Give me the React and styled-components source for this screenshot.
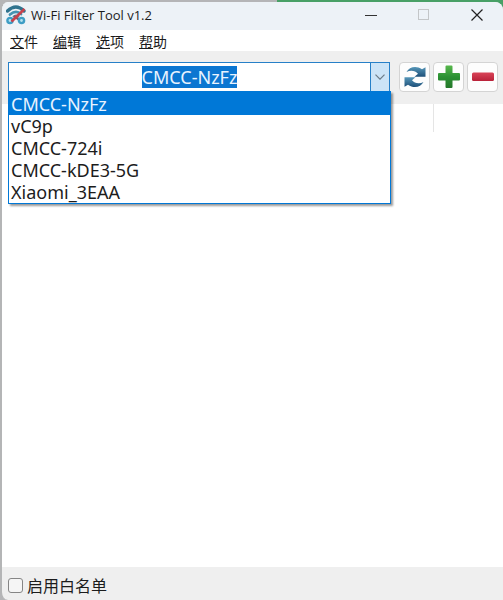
import React, { useEffect, useRef, useState } from "react";
import styled, { createGlobalStyle } from "styled-components";

const networks = ["CMCC-NzFz", "vC9p", "CMCC-724i", "CMCC-kDE3-5G", "Xiaomi_3EAA"];

const menus = [
  ["文", "件"],
  ["编", "辑"],
  ["选", "项"],
  ["帮", "助"],
];

function App() {
  const inputRef = useRef(null);
  const [network, setNetwork] = useState(networks[0]);
  const [open, setOpen] = useState(true);

  useEffect(() => {
    inputRef.current?.focus();
    inputRef.current?.select();
  }, []);

  const pick = (name) => {
    setNetwork(name);
    setOpen(false);
  };

  return (
    <Desktop>
      <GlobalStyle />
      <Window>
        <TitleBar>
          <AppIcon />
          <Title>Wi-Fi Filter Tool v1.2</Title>
          <WindowButton aria-label="Minimize">
            <svg width="12" height="12" viewBox="0 0 12 12">
              <path d="M0 6.5h12" stroke="#333" />
            </svg>
          </WindowButton>
          <WindowButton aria-label="Maximize" disabled>
            <svg width="12" height="12" viewBox="0 0 12 12">
              <rect x=".5" y=".5" width="10" height="10" fill="none" stroke="#c3c6c8" />
            </svg>
          </WindowButton>
          <WindowButton aria-label="Close">
            <svg width="12" height="12" viewBox="0 0 12 12">
              <path d="M.5.5l11 11M11.5.5l-11 11" stroke="#222" strokeWidth="1.2" />
            </svg>
          </WindowButton>
        </TitleBar>

        <MenuBar>
          {menus.map(([key, rest]) => (
            <MenuButton key={key}>
              <u>{key}</u>
              {rest}
            </MenuButton>
          ))}
        </MenuBar>

        <Toolbar>
          <ComboBox>
            <ComboInput
              ref={inputRef}
              aria-label="Network"
              role="combobox"
              aria-expanded={open}
              aria-controls="networks"
              spellCheck={false}
              value={network}
              onChange={(e) => setNetwork(e.target.value)}
            />
            <ComboArrow aria-label="Show networks" onClick={() => setOpen(!open)}>
              <svg width="10" height="6" viewBox="0 0 10 6">
                <path d="M.5.7L5 5.2 9.5.7" fill="none" stroke="#6c7b87" strokeWidth="1.2" />
              </svg>
            </ComboArrow>
            {open && (
              <Options id="networks" role="listbox">
                {networks.map((name) => (
                  <Option
                    key={name}
                    role="option"
                    aria-selected={name === network}
                    $selected={name === network}
                    onClick={() => pick(name)}
                  >
                    {name}
                  </Option>
                ))}
              </Options>
            )}
          </ComboBox>
          <Tools>
            <ToolButton aria-label="Refresh">
              <RefreshIcon />
            </ToolButton>
            <ToolButton aria-label="Add">
              <PlusIcon />
            </ToolButton>
            <ToolButton aria-label="Remove">
              <MinusIcon />
            </ToolButton>
          </Tools>
        </Toolbar>

        <ListArea>
          <ListTable>
            <thead>
              <tr>
                <HeadCell aria-label="Name" />
                <HeadCell aria-label="State" $last />
              </tr>
            </thead>
          </ListTable>
        </ListArea>

        <StatusBar>
          <CheckBox id="whitelist" type="checkbox" />
          <label htmlFor="whitelist">启用白名单</label>
        </StatusBar>
      </Window>
    </Desktop>
  );
}

export default App;

const AppIcon = () => (
  <svg width="20" height="20" viewBox="0 0 20 20" fill="none" aria-hidden="true">
    <path d="M1.5 6Q10-2 18 6" stroke="#30738f" strokeWidth="3.4" strokeLinecap="round" />
    <path d="M4 9.5Q10 4.5 15 9" stroke="#4493b2" strokeWidth="2.8" strokeLinecap="round" />
    <path d="M7 12Q10 9.5 13 12" stroke="#5b8ba2" strokeWidth="2.2" />
    <path d="M8 11l5.5 4" stroke="#755a6d" strokeWidth="2.4" />
    <circle cx="4" cy="15.5" r="2.6" fill="#b5e2ef" stroke="#3d9dc5" strokeWidth="2.4" />
    <circle cx="15.5" cy="15.5" r="2.6" fill="#b5e2ef" stroke="#3d9dc5" strokeWidth="2.4" />
    <path d="M5.5 16.5L18.5 4" stroke="#c8414c" strokeWidth="2.6" />
  </svg>
);

const RefreshIcon = () => (
  <svg width="22" height="22" viewBox="0 0 22 22" aria-hidden="true">
    <defs>
      <linearGradient id="blue" x1="0" y1="0" x2="0" y2="1">
        <stop offset="0" stopColor="#5697b9" />
        <stop offset="1" stopColor="#1d4f78" />
      </linearGradient>
    </defs>
    <path
      d="M2.5 6C5 1 12-1 18 3.200L21.500 1.200V10.800H10.500L14 7.800C11.500 4.500 6.500 3.800 2.500 6Z"
      fill="url(#blue)"
    />
    <path
      d="M19.500 16C17 21 10 23 4 18.800L.5 20.800V11.200H11.500L8 14.200C10.500 17.500 15.500 18.200 19.500 16Z"
      fill="url(#blue)"
    />
  </svg>
);

const PlusIcon = () => (
  <svg width="24" height="24" viewBox="0 0 24 24" aria-hidden="true">
    <defs>
      <linearGradient id="green" x1="0" y1="0" x2="0" y2="1">
        <stop offset="0" stopColor="#58b84c" />
        <stop offset=".5" stopColor="#2b9133" />
        <stop offset="1" stopColor="#247629" />
      </linearGradient>
    </defs>
    <path
      d="M9.500 .5h5q1 0 1 1v6.500H22q1 0 1 1v5.500q0 1-1 1h-6.500V22q0 1-1 1h-5q-1 0-1-1v-6.500H2q-1 0-1-1V9q0-1 1-1h6.500V1.500q0-1 1-1z"
      fill="url(#green)"
    />
  </svg>
);

const MinusIcon = () => (
  <svg width="24" height="24" viewBox="0 0 24 24" aria-hidden="true">
    <defs>
      <linearGradient id="red" x1="0" y1="0" x2="0" y2="1">
        <stop offset="0" stopColor="#d94458" />
        <stop offset="1" stopColor="#b92139" />
      </linearGradient>
    </defs>
    <rect x="1" y="7.500" width="22" height="8.500" rx="1.500" fill="url(#red)" />
  </svg>
);

const GlobalStyle = createGlobalStyle`
  * {
    box-sizing: border-box;
  }
  body {
    margin: 0;
    font-family: "Noto Sans", "Noto Sans CJK SC", sans-serif;
    color: #1c1c1c;
  }
  button {
    padding: 0;
    border: 0;
    background: none;
    font: inherit;
    color: inherit;
  }
  svg {
    display: block;
  }
`;

const Desktop = styled.div`
  height: 100vh;
  padding-top: 2px;
  background: linear-gradient(to right, #b5b5b7 55%, #48a066 55%);
`;

const Window = styled.main`
  display: flex;
  flex-direction: column;
  height: 100%;
  border-left: 2px solid #b4b5b6;
  border-radius: 8px 8px 0 8px;
  background: #efefef;
  overflow: hidden;
`;

const TitleBar = styled.header`
  display: flex;
  align-items: center;
  height: 28px;
  padding: 0 0 2px 4px;
  background: #edf2f7;
`;

const Title = styled.h1`
  flex: 1;
  margin: 0;
  padding-left: 5px;
  font-family: "Open Sans", sans-serif;
  font-size: 13px;
  font-weight: 400;
`;

const WindowButton = styled.button`
  display: flex;
  align-items: center;
  justify-content: center;
  width: 53px;
  height: 26px;
`;

const MenuBar = styled.nav`
  display: flex;
  gap: 15px;
  height: 21px;
  padding-left: 8px;
  background: #fff;
`;

const MenuButton = styled.button`
  font-family: "Noto Sans CJK SC", sans-serif;
  font-size: 14px;
  line-height: 20px;
`;

const Toolbar = styled.div`
  display: flex;
  gap: 9px;
  padding: 11px 5px 12px 6px;
`;

const ComboBox = styled.div`
  position: relative;
  display: flex;
  flex: 1;
  height: 30px;
  border: 1px solid #2680c8;
  background: #fff;
`;

const ComboInput = styled.input`
  flex: 1;
  min-width: 0;
  padding: 0;
  border: 0;
  outline: 0;
  background: transparent;
  font-family: "Noto Sans", sans-serif;
  font-size: 18px;
  line-height: 22px;
  text-align: center;
  color: #1c1c1c;

  &::selection {
    background: #0b76d1;
    color: #e8f3ff;
  }
`;

const ComboArrow = styled.button`
  display: flex;
  align-items: center;
  justify-content: center;
  width: 19px;
  border-left: 1px solid #2680c8;
  background: #cce4f7;
`;

const Options = styled.ul`
  position: absolute;
  z-index: 1;
  top: 100%;
  left: -1px;
  right: -2px;
  margin: 0;
  padding: 0;
  border: 1px solid #0078d7;
  border-top-width: 2px;
  list-style: none;
  background: #fff;
  box-shadow: 2px 2px 2px rgba(0, 0, 0, 0.4);
`;

const Option = styled.li`
  padding-left: 2px;
  font-size: 18px;
  line-height: 22px;
  color: ${({ $selected }) => ($selected ? "#e8f3ff" : "#1c1c1c")};
  background: ${({ $selected }) => ($selected ? "#0078d7" : "#fff")};
`;

const Tools = styled.div`
  display: flex;
  gap: 3px;
`;

const ToolButton = styled.button`
  display: flex;
  align-items: center;
  justify-content: center;
  width: 31px;
  height: 30px;
  border: 1px solid #d4d4d4;
  border-radius: 4px;
  background: #fdfdfd;
`;

const ListArea = styled.section`
  flex: 1;
  background: #fff;
`;

const ListTable = styled.table`
  width: 100%;
  border-collapse: collapse;
  table-layout: fixed;
`;

const HeadCell = styled.th`
  width: ${({ $last }) => ($last ? "70px" : "auto")};
  height: 28px;
  padding: 0;
  border-left: ${({ $last }) => ($last ? "1px solid #e5e5e5" : "0")};
`;

const StatusBar = styled.footer`
  display: flex;
  align-items: center;
  gap: 4px;
  height: 33px;
  padding: 3px 6px 0;
  font-family: "Noto Sans CJK SC", sans-serif;
  font-size: 16px;
  line-height: 24px;
`;

const CheckBox = styled.input`
  appearance: none;
  width: 15px;
  height: 15px;
  margin: 0;
  border: 1px solid #858585;
  border-radius: 3px;
  background: #f5f5f5;

  &:checked {
    background: #0078d7;
  }
`;
